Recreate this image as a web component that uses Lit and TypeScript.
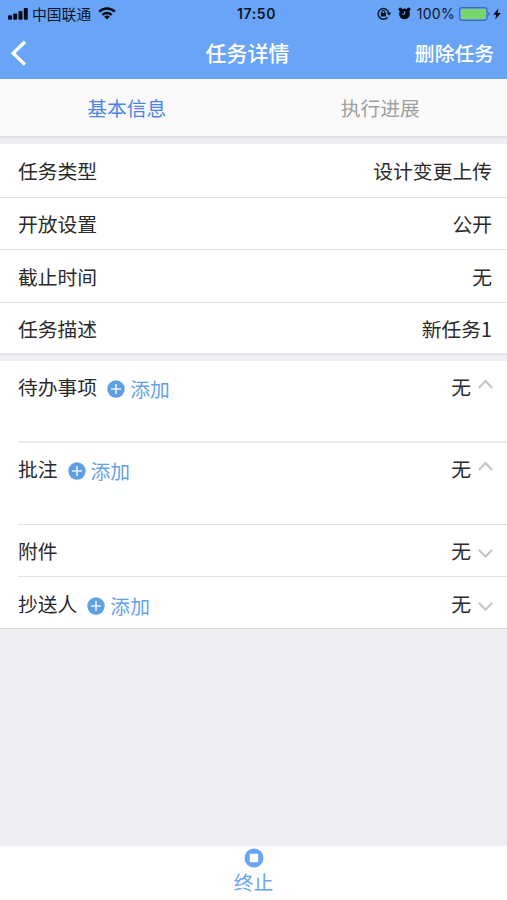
import { LitElement, html, css, svg, nothing } from "lit";
import { customElement, property } from "lit/decorators.js";

interface Field { label: string; value: string; }
interface Section { label: string; value: string; add: boolean; open: boolean; }

const fields: Field[] = [
  { label: "任务类型", value: "设计变更上传" },
  { label: "开放设置", value: "公开" },
  { label: "截止时间", value: "无" },
  { label: "任务描述", value: "新任务1" },
];

const sections: Section[] = [
  { label: "待办事项", value: "无", add: true, open: true },
  { label: "批注", value: "无", add: true, open: true },
  { label: "附件", value: "无", add: false, open: false },
  { label: "抄送人", value: "无", add: true, open: false },
];

@customElement("status-bar")
export class StatusBar extends LitElement {
  static styles = css`
    :host { display: grid; grid-template-columns: 1fr auto 1fr; align-items: center; height: 27px; color: #0b1526; font: 14px/20px Inter, "Noto Sans CJK SC", sans-serif; }
    .left, .right { display: flex; align-items: center; }
    .left { padding-left: 8px; }
    .right { justify-content: flex-end; padding-right: 6px; }
    .carrier { margin: 0 7px 0 4px; font: 14.8px/20px "Noto Sans CJK SC", sans-serif; }
    .time { font-weight: 600; font-size: 14px; letter-spacing: 0.6px; position: relative; left: 3px; }
    .lock { margin-right: 6px; }
    .alarm { margin-right: 6px; }
    .percent { letter-spacing: 0.3px; margin-right: 4px; }
    .battery { margin-right: 2px; }
    svg { display: block; flex: none; }
  `;
  render() {
    return html`
      <div class="left">
        <svg width="20" height="12" viewBox="0 0 20 12" fill="#050b16">
          <rect x="0" y="7.2" width="4" height="4.6" rx="1.1" /><rect x="5.2" y="5.4" width="4" height="6.4" rx="1.1" />
          <rect x="10.5" y="3" width="4" height="8.8" rx="1.1" /><rect x="15.8" y="0" width="4" height="11.8" rx="1.1" />
        </svg>
        <span class="carrier">中国联通</span>
        <svg width="18" height="13" viewBox="0 0 18 13" fill="none" stroke="#050b16" stroke-width="2.4">
          <path d="M1.1 4.7a11.2 11.2 0 0 1 15.8 0" /><path d="M4.3 8a6.7 6.7 0 0 1 9.4 0" />
          <path d="M9 12.5L6.2 9.8a4 4 0 0 1 5.6 0z" fill="#050b16" stroke="none" />
        </svg>
      </div>
      <span class="time">17:50</span>
      <div class="right">
        <svg class="lock" width="15" height="13" viewBox="0 0 15 13" fill="none" stroke="#0b1526" stroke-width="1.4">
          <path d="M10.6 10.2A5.3 5.3 0 1 1 11.6 5.6" /><path d="M9.6 5.6h4.8L12 8.8z" fill="#0b1526" stroke="none" />
          <rect x="3.8" y="5.8" width="5.2" height="3.6" rx=".5" fill="#0b1526" stroke="none" />
          <path d="M4.9 6V5a1.5 1.5 0 0 1 3 0v1" stroke-width="1.1" />
        </svg>
        <svg class="alarm" width="13" height="13" viewBox="0 0 13 13" fill="#050b16">
          <circle cx="6.5" cy="6.9" r="5.4" /><circle cx="2.3" cy="2.4" r="1.8" /><circle cx="10.7" cy="2.4" r="1.8" />
          <path d="M6.7 4.2v3H4.2" fill="none" stroke="#6aa4f7" stroke-width="1" />
        </svg>
        <span class="percent">100%</span>
        <svg class="battery" width="32" height="14" viewBox="0 0 32 14">
          <rect x=".6" y=".6" width="27.5" height="12.8" rx="2.5" fill="none" stroke="#3f6da8" stroke-width="1.1" />
          <rect x="1.9" y="1.9" width="24.9" height="10.2" rx="1" fill="#78d66c" />
          <path d="M29.4 4.8c1.7.4 1.7 4 0 4.4z" fill="#3f6da8" />
        </svg>
        <svg width="8" height="12" viewBox="0 0 8 12" fill="#050b16"><path d="M5.3.5L.2 6.8h3L2.2 11.5 7.8 5H4.6z" /></svg>
      </div>`;
  }
}

@customElement("nav-bar")
export class NavBar extends LitElement {
  static styles = css`
    :host { display: grid; grid-template-columns: 1fr auto 1fr; align-items: center; height: 52px; padding: 0 13px 0 10px; box-sizing: border-box; color: #fff; font-weight: 500; line-height: 28px; }
    .back { display: block; }
    .title { font-size: 21px; position: relative; left: -4.5px; top: -1px; }
    .action { font-size: 19.8px; text-align: right; }
  `;
  render() {
    return html`
      <svg class="back" width="18" height="26" viewBox="0 0 18 26" fill="none" stroke="#fff" stroke-width="3.4"><path d="M15 1.8L3.2 13.2 15 24.6" /></svg>
      <span class="title">任务详情</span>
      <span class="action">删除任务</span>`;
  }
}

@customElement("field-row")
export class FieldRow extends LitElement {
  @property() label = "";
  @property() value = "";
  static styles = css`
    :host { display: flex; align-items: center; justify-content: space-between; padding: 0 15px 0 18px; color: #2b2b2b; }
  `;
  render() {
    return html`<span>${this.label}</span><span>${this.value}</span>`;
  }
}

@customElement("section-row")
export class SectionRow extends LitElement {
  @property({ attribute: false }) item!: Section;
  static styles = css`
    :host { display: flex; justify-content: space-between; align-items: flex-start; padding: 11px 14px 0 0; box-sizing: border-box; color: #2b2b2b; line-height: 30px; }
    .left, .right, .add { display: flex; align-items: flex-start; }
    .add { margin: 2px 0 0 10px; color: #66a3e6; align-items: center; gap: 5px; }
    .right { gap: 7px; }
    .chevron { margin-top: 7px; }
    .down { margin-top: 12px; }
    svg { display: block; flex: none; }
  `;
  render() {
    const { label, value, add, open } = this.item;
    return html`
      <div class="left">
        <span>${label}</span>
        ${add
          ? html`<span class="add"
              ><svg width="18" height="18" viewBox="0 0 18 18"><circle cx="9" cy="9" r="8.7" fill="#5f9fe3" /><path d="M4 9h10M9 4v10" stroke="#e8f3ff" stroke-width="1.6" /></svg
              >添加</span>`
          : nothing}
      </div>
      <div class="right">
        <span>${value}</span>
        <svg class="chevron ${open ? "" : "down"}" width="15" height="11" viewBox="0 0 15 11" fill="none" stroke="#c4c4c4" stroke-width="2">
          ${open ? svg`<path d="M.8 9L7.5 2l6.7 7" />` : svg`<path d="M.8 1.8l6.7 7 6.7-7" />`}
        </svg>
      </div>`;
  }
}

@customElement("app-root")
export class AppRoot extends LitElement {
  static styles = css`
    :host { display: flex; flex-direction: column; height: 900px; overflow: hidden; background: #eeeef3; font: 19.8px/30px "Noto Sans CJK SC", sans-serif; }
    .header { background: #6aa4f7; height: 79px; flex: none; }
    .tabs { display: grid; grid-template-columns: 1fr 1fr; height: 57px; background: #fafafa; border-bottom: 2px solid #e2e2e4; flex: none; text-align: center; line-height: 57px; }
    .tab { color: #a0a0a0; }
    .active { color: #4a84ea; }
    .fields { margin-top: 6px; background: #fff; border-bottom: 2px solid #e5e5e8; }
    .field { box-sizing: border-box; height: 54px; padding-top: 1px; border-bottom: 1px solid #e1e1e3; }
    .field:nth-child(2) { height: 52px; }
    .field:nth-child(3) { height: 53px; }
    .field:last-child { height: 50px; border-bottom: 0; }
    .sections { margin-top: 6px; background: #fff; padding-left: 18px; border-bottom: 1px solid #dddde0; }
    .section { height: 52px; border-bottom: 1px solid #e1e1e3; }
    .open { height: 82px; border-bottom: 2px solid #ebebed; }
    .open + .open { border-bottom: 1px solid #e1e1e3; }
    .section:last-child { height: 51px; padding-top: 12px; border-bottom: 0; }
    .footer { margin-top: auto; height: 54px; flex: none; background: #fff; color: #6ba3ef; display: flex; flex-direction: column; align-items: center; box-sizing: border-box; padding-top: 2px; line-height: 28px; }
    .stop { display: block; flex: none; }
  `;
  render() {
    return html`
      <div class="header"><status-bar></status-bar><nav-bar></nav-bar></div>
      <div class="tabs"><span class="tab active">基本信息</span><span class="tab">执行进展</span></div>
      <div class="fields">
        ${fields.map((f) => html`<field-row class="field" .label=${f.label} .value=${f.value}></field-row>`)}
      </div>
      <div class="sections">
        ${sections.map((s) => html`<section-row class="section ${s.open ? "open" : ""}" .item=${s}></section-row>`)}
      </div>
      <div class="footer">
        <svg class="stop" width="20" height="20" viewBox="0 0 20 20"><circle cx="10" cy="10" r="9.5" fill="#6aa4f7" /><rect x="5.8" y="5.8" width="8.4" height="8.4" rx="1" fill="#fff" /></svg>
        <span>终止</span>
      </div>`;
  }
}
